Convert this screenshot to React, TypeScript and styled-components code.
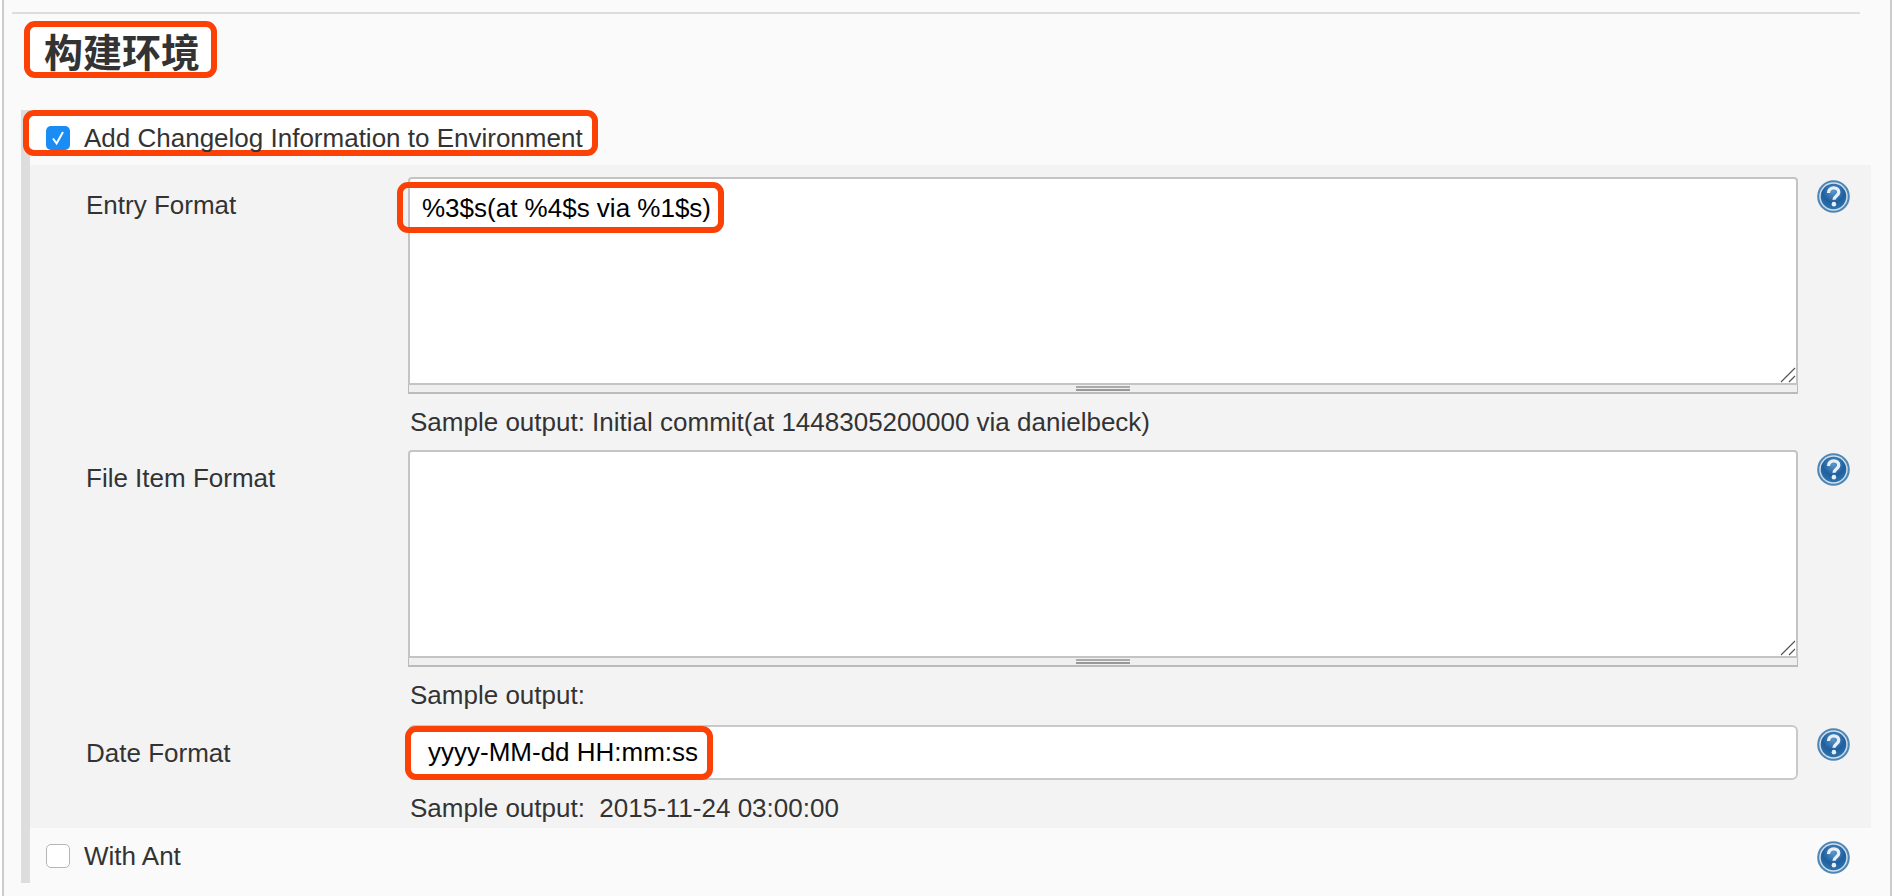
import React from 'react';
import styled, {createGlobalStyle} from 'styled-components';

const GlobalStyle = createGlobalStyle`
  html, body {
    margin: 0;
    padding: 0;
    background: #fff;
  }
  body {
    font-family: "Liberation Sans", Arial, "Noto Sans CJK SC", sans-serif;
    color: #333;
    overflow: hidden;
  }
`;

const highlight = '#fb4106';

const Page = styled.div`
  box-sizing: border-box;
  width: 1890px;
  height: 896px;
  margin-left: 2px;
  padding-top: 12px;
  background: #fafafa;
  border-left: 2px solid #ccc;
  border-right: 2px solid #ccc;
  overflow: hidden;
`;

const Rule = styled.div`
  height: 2px;
  margin: 0 30px 0 8px;
  background: #ddd;
`;

const TitleBox = styled.div`
  box-sizing: border-box;
  width: 193px;
  height: 57px;
  margin: 7px 0 0 20px;
  padding-left: 3px;
  border: 6px solid ${highlight};
  border-radius: 11px;
  background: #fff;
  display: flex;
  align-items: center;
  justify-content: center;
`;

const Title = styled.h2`
  margin: 2px 0 0;
  font-size: 39px;
  line-height: 45px;
  font-weight: 700;
  color: #333;
  font-family: "Noto Sans CJK SC", sans-serif;
`;

const Block = styled.div`
  margin: 32px 0 0 17px;
  width: 1841px;
  height: 773px;
  border-left: 9px solid #ddd;
`;

const CheckRow = styled.div`
  position: relative;
  display: flex;
  align-items: center;
  height: 55px;
  padding-left: 16px;
`;

const CheckLabelBox = styled.div`
  box-sizing: border-box;
  position: absolute;
  left: -7px;
  top: 0;
  width: 575px;
  height: 46px;
  border: 6px solid ${highlight};
  border-radius: 11px;
  background: #fff;
`;

const Check = styled.span<{$checked?: boolean}>`
  position: relative;
  box-sizing: border-box;
  width: 24px;
  height: 24px;
  margin-right: 14px;
  border-radius: 5px;
  background: ${p => (p.$checked ? '#1a8cf5' : '#fff')};
  border: ${p => (p.$checked ? 'none' : '1px solid #b5b5b5')};
  display: flex;
  align-items: center;
  justify-content: center;
`;

const CheckText = styled.span`
  position: relative;
  font-size: 26px;
  line-height: 30px;
  color: #333;
`;

const CheckLead = styled.div`
  display: flex;
  align-items: center;
`;

const Nested = styled.div`
  width: 1841px;
  height: 663px;
  background: #f3f3f3;
  padding-top: 12px;
  box-sizing: border-box;
`;

const FormRow = styled.div<{$height: number}>`
  display: grid;
  grid-template-columns: 378px 1390px 1fr;
  height: ${p => p.$height}px;
`;

const FieldLabel = styled.label`
  padding: 14px 0 0 56px;
  font-size: 26px;
  line-height: 28px;
  color: #333;
`;

const Field = styled.div`
  position: relative;
  display: flex;
  flex-direction: column;
`;

const AreaWrap = styled.div`
  position: relative;
  height: 208px;
`;

const Area = styled.textarea`
  box-sizing: border-box;
  display: block;
  width: 100%;
  height: 100%;
  margin: 0;
  padding: 14px 12px;
  border: 2px solid #c4c4c4;
  border-radius: 4px 4px 0 0;
  background: #fff;
  font-family: "Liberation Sans", Arial, sans-serif;
  font-size: 26px;
  line-height: 30px;
  color: #000;
  resize: none;
  outline: none;
`;

const ResizeGrip = styled.svg`
  position: absolute;
  right: 2px;
  bottom: 2px;
`;

const Grippie = styled.div`
  box-sizing: border-box;
  height: 9px;
  background: #efefef;
  border: 1px solid #bbb;
  border-top: none;
  border-bottom-width: 2px;
  display: flex;
  justify-content: center;
`;

const GripHandle = styled.span`
  width: 54px;
  height: 5px;
  margin-top: 1px;
  border-top: 2px solid #aaa;
  border-bottom: 2px solid #999;
  box-sizing: border-box;
`;

const Hint = styled.div`
  margin: 14px 0 0 2px;
  font-size: 26px;
  line-height: 28px;
  white-space: pre;
  color: #333;
`;

const Line = styled.input`
  box-sizing: border-box;
  display: block;
  width: 100%;
  height: 55px;
  margin: 0;
  padding: 0 18px;
  border: 2px solid #c9c9c9;
  border-radius: 6px;
  background: #fff;
  font-family: "Liberation Sans", Arial, sans-serif;
  font-size: 26px;
  color: #000;
  outline: none;
`;

const Mark = styled.div<{$left: number; $top: number; $width: number; $height: number}>`
  box-sizing: border-box;
  position: absolute;
  left: ${p => p.$left}px;
  top: ${p => p.$top}px;
  width: ${p => p.$width}px;
  height: ${p => p.$height}px;
  border: 6px solid ${highlight};
  border-radius: 11px;
  pointer-events: none;
`;

const HelpCell = styled.div`
  padding: 3px 0 0 19px;
`;

const BottomRow = styled.div`
  display: flex;
  align-items: center;
  justify-content: space-between;
  height: 55px;
  padding: 0 21px 0 16px;
  box-sizing: border-box;
`;

const BottomHelp = styled.div`
  margin-top: 3px;
  height: 32px;
`;

const HelpIcon = ({id}: {id: string}) => (
  <svg width="33" height="33" viewBox="0 0 32 32" aria-hidden="true">
    <defs>
      <radialGradient id={id} cx="50%" cy="30%" r="70%">
        <stop offset="0%" stopColor="#5a97cc" />
        <stop offset="60%" stopColor="#1f5f9e" />
        <stop offset="100%" stopColor="#2f73ad" />
      </radialGradient>
    </defs>
    <circle cx="16" cy="16" r="15.8" fill="#4f86b3" />
    <circle cx="16" cy="16" r="13.8" fill="#cfe0ee" />
    <circle cx="16" cy="16" r="12.4" fill={`url(#${id})`} />
    <path
      d="M11.2 12.5c0-3 2.2-4.9 5-4.9 2.9 0 4.9 1.7 4.9 4.2 0 3.5-4.7 3.8-4.7 7.4"
      fill="none"
      stroke="#e8f0f7"
      strokeWidth="3.2"
    />
    <circle cx="16.4" cy="23.4" r="2.2" fill="#e8f0f7" />
  </svg>
);

const Tick = () => (
  <svg width="18" height="18" viewBox="0 0 18 18" aria-hidden="true">
    <path d="M4 9.5l3.6 5L14 3" fill="none" stroke="#fff" strokeWidth="2" />
  </svg>
);

const TextArea = ({value}: {value: string}) => (
  <AreaWrap>
    <Area readOnly value={value} />
    <ResizeGrip width="16" height="16" viewBox="0 0 16 16" aria-hidden="true">
      <path d="M1 15L15 1M9 15l6-6" stroke="#555" strokeWidth="1.2" fill="none" />
    </ResizeGrip>
  </AreaWrap>
);

const App = () => {
  return (
    <>
      <GlobalStyle />
      <Page>
        <Rule />
        <TitleBox>
          <Title>构建环境</Title>
        </TitleBox>
        <Block>
          <CheckRow>
            <CheckLabelBox />
            <CheckLead>
              <Check $checked>
                <Tick />
              </Check>
              <CheckText>Add Changelog Information to Environment</CheckText>
            </CheckLead>
          </CheckRow>
          <Nested>
            <FormRow $height={273}>
              <FieldLabel>Entry Format</FieldLabel>
              <Field>
                <TextArea value="%3$s(at %4$s via %1$s)" />
                <Grippie>
                  <GripHandle />
                </Grippie>
                <Hint>Sample output: Initial commit(at 1448305200000 via danielbeck)</Hint>
                <Mark $left={-11} $top={5} $width={327} $height={51} />
              </Field>
              <HelpCell>
                <HelpIcon id="help-entry" />
              </HelpCell>
            </FormRow>
            <FormRow $height={275}>
              <FieldLabel>File Item Format</FieldLabel>
              <Field>
                <TextArea value="" />
                <Grippie>
                  <GripHandle />
                </Grippie>
                <Hint>Sample output:</Hint>
              </Field>
              <HelpCell>
                <HelpIcon id="help-file" />
              </HelpCell>
            </FormRow>
            <FormRow $height={103}>
              <FieldLabel>Date Format</FieldLabel>
              <Field>
                <Line readOnly value="yyyy-MM-dd HH:mm:ss" />
                <Hint>Sample output:  2015-11-24 03:00:00</Hint>
                <Mark $left={-3} $top={1} $width={308} $height={54} />
              </Field>
              <HelpCell>
                <HelpIcon id="help-date" />
              </HelpCell>
            </FormRow>
          </Nested>
          <BottomRow>
            <CheckLead>
              <Check />
              <CheckText>With Ant</CheckText>
            </CheckLead>
            <BottomHelp>
              <HelpIcon id="help-ant" />
            </BottomHelp>
          </BottomRow>
        </Block>
      </Page>
    </>
  );
};

export default App;
